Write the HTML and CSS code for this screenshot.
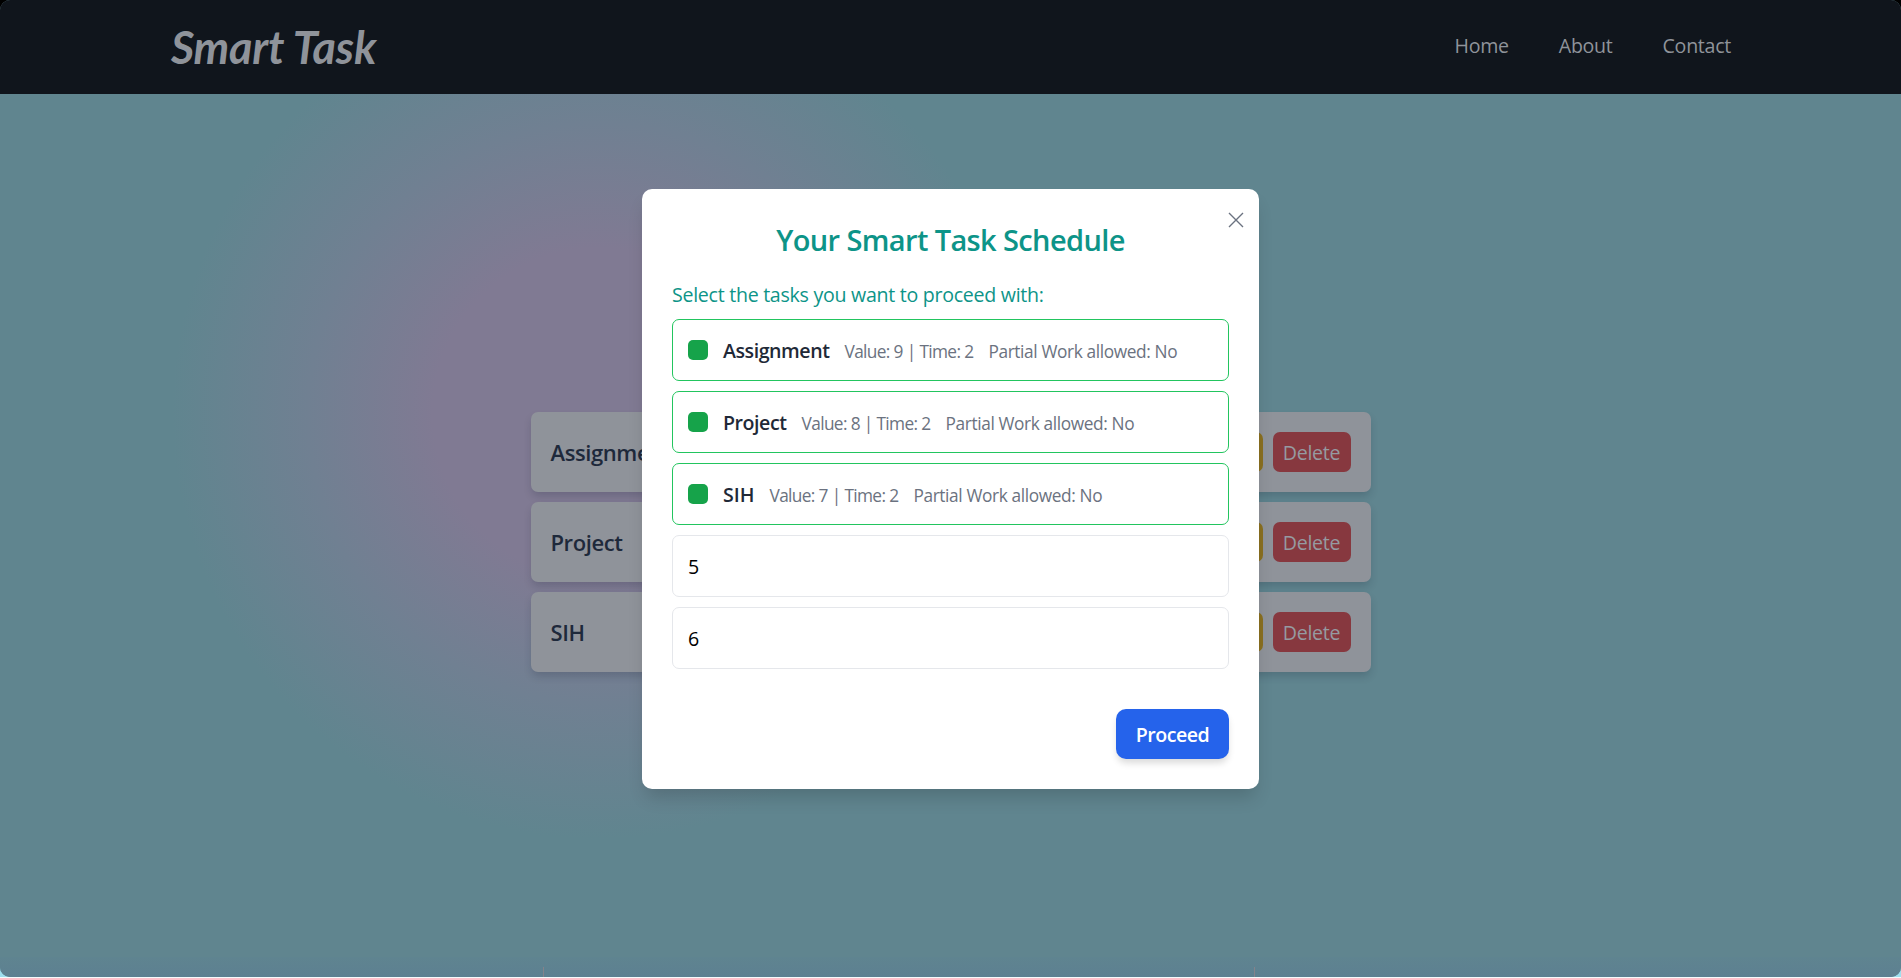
FILE: index.html
```
<!DOCTYPE html>
<html lang="en">
<head>
<meta charset="utf-8">
<title>Smart Task</title>
<link rel="stylesheet" href="styles.css">
</head>
<body>
<div class="page">
  <header class="nav">
    <div class="logo">Smart Task</div>
    <nav class="links"><a class="home">Home</a><a class="about">About</a><a class="contact">Contact</a></nav>
  </header>
  <main class="board">
    <div class="card"><span class="card-name">Assignment</span><div class="actions"><span class="btn edit">Edit</span><span class="btn delete"><span>Delete</span></span></div></div>
    <div class="card"><span class="card-name">Project</span><div class="actions"><span class="btn edit">Edit</span><span class="btn delete"><span>Delete</span></span></div></div>
    <div class="card"><span class="card-name">SIH</span><div class="actions"><span class="btn edit">Edit</span><span class="btn delete"><span>Delete</span></span></div></div>
  </main>
  <footer class="panel"></footer>
</div>
<div class="overlay">
  <section class="modal">
    <svg class="close" viewBox="0 0 16 16"><path d="M1 1L15 15M15 1L1 15" fill="none" stroke="#6b7280" stroke-width="1.4"/></svg>
    <h2 class="title"><span>Your Smart Task Schedule</span></h2>
    <p class="hint">Select the tasks you want to proceed with:</p>
    <div class="rows">
      <div class="row on"><i class="check"></i><b class="name">Assignment</b><span class="meta value">Value: 9 | Time: 2</span><span class="meta partial">Partial Work allowed: No</span></div>
      <div class="row on"><i class="check"></i><b class="name">Project</b><span class="meta value">Value: 8 | Time: 2</span><span class="meta partial">Partial Work allowed: No</span></div>
      <div class="row on"><i class="check"></i><b class="name short">SIH</b><span class="meta value">Value: 7 | Time: 2</span><span class="meta partial">Partial Work allowed: No</span></div>
      <div class="row"><span class="num">5</span></div>
      <div class="row"><span class="num">6</span></div>
    </div>
    <button class="proceed">Proceed</button>
  </section>
</div>
</body>
</html>
```
FILE: styles.css
```
* { box-sizing: border-box; }
html { background: linear-gradient(#000 0 50%, #9edfee 50% 100%); height: 100%; overflow: hidden; }
body { margin: 0; height: 978px; font-family: "Open Sans", "Noto Sans", sans-serif; font-size: 19.6px; letter-spacing: -.28px; border-bottom: 1px solid #f4fbfc; overflow: hidden; }
.page { height: 977px; display: flex; flex-direction: column; border-radius: 10px; overflow: hidden;
  background: radial-gradient(circle at 598px 413px, #807a93 0, #807a93 165px, #708092 290px, #60858f 426px); }
.nav { height: 94px; background: #10151c; display: flex; justify-content: space-between; padding: 0 170px 0 171px; align-items: center; color: #8f939a; }
.logo { font-family: Lato, sans-serif; font-style: italic; font-weight: 700; font-size: 45px; letter-spacing: -.2px; line-height: 94px; white-space: nowrap; }
.links { display: flex; gap: 50px; line-height: 30px; padding-bottom: 3px; }
.board { flex: 1; display: flex; flex-direction: column; gap: 10px; align-items: center; padding-top: 318px; }
.card { width: 840px; height: 80px; background: #8f939a; border-radius: 7px; display: flex; justify-content: space-between; align-items: center; padding: 0 20px; box-shadow: 0 5px 8px -1px rgba(20,30,50,.2); }
.card-name { font-size: 22px; font-weight: 600; letter-spacing: -.4px; color: #1e293b; }
.actions { display: flex; gap: 10px; }
.btn { width: 78px; height: 40px; border-radius: 7px; text-align: center; line-height: 41px; color: #969aa1; }
.edit { width: 60px; background: #8a7020; }
.delete { background: #87383f; }
.panel { height: 20px; background: linear-gradient(#5f8490, #5d8091); display: flex; padding: 10px 646px 0 543px; }
.panel::before { content: ""; flex: 1; border: solid #84828a; border-width: 0 1px; }
.overlay { position: absolute; inset: 0; display: flex; justify-content: center; align-items: center; }
.modal { position: relative; width: 617px; height: 600px; background: #fff; border-radius: 10px; padding: 30px; display: flex; flex-direction: column; box-shadow: 0 12px 18px -4px rgba(0,0,0,.16); }
.close { position: absolute; width: 16px; height: 16px; right: 15px; top: 23px; }
.title { margin: 0; height: 43px; line-height: 41px; text-align: center; font-size: 29px; font-weight: 600; letter-spacing: -.62px; color: #0d9488; white-space: nowrap; }
.hint { margin: 18px 0 9px; height: 30px; line-height: 30px; color: #0d9488; white-space: nowrap; }
.rows { display: flex; flex-direction: column; gap: 10px; }
.row { height: 62px; border: 1px solid #e5e7eb; border-radius: 7px; padding: 0 15px; display: flex; align-items: center; gap: 15px; white-space: nowrap; }
.on { border-color: #22c55e; }
.check { width: 20px; height: 20px; border-radius: 5px; background: #16a34a; }
.name { font-weight: 600; letter-spacing: -.45px; color: #1f2937; padding-top: 1px; }
.short { letter-spacing: 0; }
.meta { font-size: 17.3px; color: #6b7280; padding-top: 2px; }
.value { letter-spacing: -.64px; }
.partial { letter-spacing: -.38px; }
.num { color: #000; padding-top: 1px; }
.proceed { align-self: flex-end; margin-top: 40px; width: 113px; height: 50px; border: 0; border-radius: 10px; background: #2563eb; color: #fff; font: 600 19.6px "Open Sans", sans-serif; letter-spacing: -.5px; padding: 0; box-shadow: 0 5px 7px -1px rgba(0,0,0,.15); }
```
